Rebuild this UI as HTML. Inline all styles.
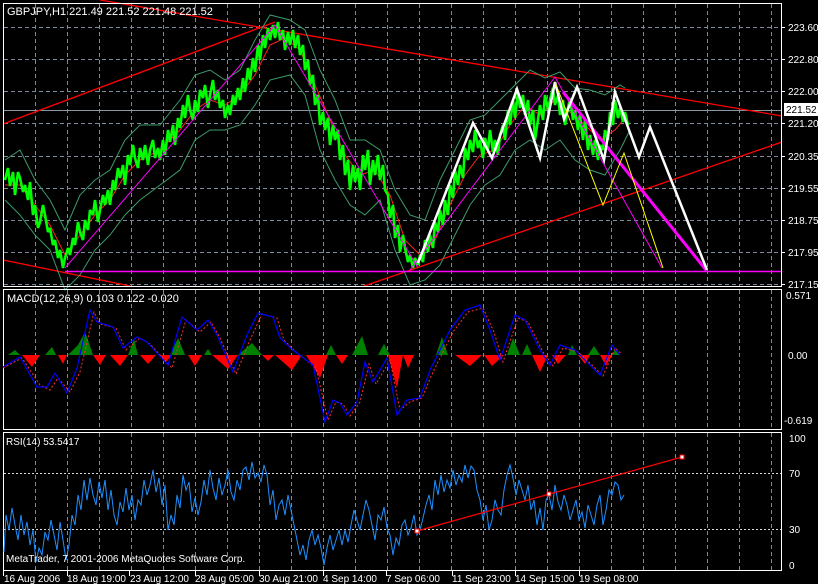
<!DOCTYPE html>
<html><head><meta charset="utf-8"><style>
html,body{margin:0;padding:0;background:#000;}
svg{display:block;font-family:"Liberation Sans",sans-serif;}
</style></head><body>
<svg width="818" height="584" viewBox="0 0 818 584" xmlns="http://www.w3.org/2000/svg">
<rect width="818" height="584" fill="#000"/>
<g stroke="#7f8a99" stroke-width="1" stroke-dasharray="4,3">
<path d="M35.5 4V286M67.5 4V286M99.5 4V286M131.5 4V286M163.5 4V286M195.5 4V286M227.5 4V286M259.5 4V286M291.5 4V286M323.5 4V286M355.5 4V286M387.5 4V286M419.5 4V286M451.5 4V286M483.5 4V286M515.5 4V286M547.5 4V286M579.5 4V286M611.5 4V286M643.5 4V286M675.5 4V286M707.5 4V286M739.5 4V286M771.5 4V286"/>
<path d="M35.5 290V430M67.5 290V430M99.5 290V430M131.5 290V430M163.5 290V430M195.5 290V430M227.5 290V430M259.5 290V430M291.5 290V430M323.5 290V430M355.5 290V430M387.5 290V430M419.5 290V430M451.5 290V430M483.5 290V430M515.5 290V430M547.5 290V430M579.5 290V430M611.5 290V430M643.5 290V430M675.5 290V430M707.5 290V430M739.5 290V430M771.5 290V430"/>
<path d="M35.5 433V570M67.5 433V570M99.5 433V570M131.5 433V570M163.5 433V570M195.5 433V570M227.5 433V570M259.5 433V570M291.5 433V570M323.5 433V570M355.5 433V570M387.5 433V570M419.5 433V570M451.5 433V570M483.5 433V570M515.5 433V570M547.5 433V570M579.5 433V570M611.5 433V570M643.5 433V570M675.5 433V570M707.5 433V570M739.5 433V570M771.5 433V570"/>
<path d="M4 27.5H782M4 59.5H782M4 91.5H782M4 123.5H782M4 156.5H782M4 188.5H782M4 220.5H782M4 252.5H782M4 284.5H782"/>
</g>
<g stroke="#ddd" stroke-width="1" stroke-dasharray="2,2">
<path d="M4 473.5H782M4 529.5H782"/>
</g>
<path d="M4 110.5H782" stroke="#8a96a6" stroke-width="1"/>
<g stroke="#ff0000" stroke-width="1.3" fill="none">
<path d="M3 124L275 22"/>
<path d="M100 0L782 116"/>
<path d="M364 286L782 142"/>
<path d="M3 260L130 286"/>
</g>
<g stroke="#3d9a6a" stroke-width="1" fill="none">
<polyline points="5,160 20,150 35,180 50,200 65,230 80,195 95,180 110,170 125,140 140,125 160,125 180,100 195,75 210,70 225,80 240,70 255,40 270,15 290,20 305,30 320,70 335,100 350,140 365,140 380,150 395,190 410,215 425,220 440,180 455,150 470,120 485,115 500,100 515,85 530,70 545,78 560,72 575,88 590,90 605,95 620,85 625,88"/>
<polyline points="5,200 20,215 35,235 50,250 65,290 80,275 95,250 110,235 125,215 140,200 160,185 180,170 195,140 210,130 225,130 240,125 255,105 270,80 290,75 305,95 320,150 335,180 350,205 365,215 380,200 395,250 410,285 425,280 440,265 455,235 470,205 485,185 500,175 515,150 530,140 545,150 560,140 575,160 590,170 605,175 620,150 630,130"/>
</g>
<polyline fill="none" stroke="#ff2020" stroke-width="1" points="5,185 20,185 35,205 50,225 65,255 80,235 95,215 110,200 125,175 140,160 160,150 180,130 195,110 210,100 225,105 240,95 255,75 270,45 285,38 300,50 315,85 330,120 345,155 360,175 375,170 390,195 405,240 420,255 435,240 450,205 465,175 480,155 495,150 510,125 525,105 540,115 555,100 570,112 585,125 600,140 615,130 625,118"/>
<polyline fill="none" stroke="#00ff00" stroke-width="2.6" stroke-linejoin="bevel" points="5,180 8,168 10,186 13,172 15,195 18,172 20,178 23,192 25,185 28,200 30,182 33,215 35,205 38,228 40,222 43,205 45,215 48,232 50,228 53,245 55,240 58,258 60,250 63,268 65,258 68,248 70,255 73,238 75,245 78,222 80,232 83,240 85,220 88,230 90,210 93,215 95,200 98,222 100,210 103,195 105,205 108,190 110,205 113,180 115,190 118,168 120,178 123,165 125,185 128,155 130,165 133,145 135,158 138,168 140,148 143,160 145,145 148,165 150,150 153,140 155,158 158,148 160,160 163,140 165,155 168,130 170,142 173,125 175,145 178,118 180,128 183,105 185,118 188,95 190,110 193,120 195,100 198,112 200,90 203,98 205,85 208,108 210,95 213,80 215,100 218,90 220,108 223,100 225,118 228,105 230,115 233,95 235,105 238,88 240,100 243,78 245,92 248,68 250,80 253,58 255,72 258,45 260,60 263,35 265,48 268,28 270,40 273,25 275,38 278,22 280,40 283,30 285,50 288,32 290,45 293,30 295,48 298,35 300,55 303,45 305,70 308,60 310,85 313,75 315,105 318,95 320,125 323,112 325,130 328,118 330,145 333,125 335,140 338,130 340,160 343,145 345,175 348,160 350,190 353,165 355,182 358,168 360,190 363,155 365,170 368,150 370,185 373,160 375,175 378,155 380,180 383,165 385,190 388,195 390,218 393,205 395,238 398,225 400,252 403,235 405,248 408,262 410,255 413,268 415,258 418,265 420,255 423,262 425,240 428,252 430,235 433,248 435,222 438,232 440,210 443,225 445,200 448,215 450,185 453,198 455,170 458,185 460,165 463,178 465,148 468,160 470,140 473,152 475,130 478,148 480,140 483,158 485,138 488,150 490,130 493,152 495,140 498,155 500,135 503,125 505,140 508,110 510,125 513,100 515,118 518,92 520,108 523,95 525,115 528,100 530,125 533,110 535,140 538,120 540,105 543,120 545,95 548,110 550,100 553,88 555,105 558,95 560,115 563,100 565,125 568,108 570,98 573,120 575,110 578,130 580,115 583,140 585,120 588,150 590,135 593,155 595,140 598,160 600,145 603,150 605,130 608,140 610,112 613,125 615,100 618,118 620,108 623,122 625,112 628,125"/>
<g stroke="#ff00ff" fill="none">
<path d="M65 271.5H782" stroke-width="1.5"/>
<path d="M65 268L275 25L418 268" stroke-width="1"/>
<path d="M410 270L555 77L662 268" stroke-width="1"/>
<path d="M563 92L706 270" stroke-width="3"/>
</g>
<polyline fill="none" stroke="#fff" stroke-width="2.5" points="418,263 473,123 492,158 517,89 540,158 555,82 564,119 577,87 604,160 615,92 639,157 650,127 707,270"/>
<polyline fill="none" stroke="#ffff00" stroke-width="1" points="555,82 603,205 624,153 663,268"/>
<g stroke="#fff" fill="none" stroke-width="1">
<rect x="3.5" y="3.5" width="778" height="283"/>
<rect x="3.5" y="289.5" width="778" height="140"/>
<rect x="3.5" y="432.5" width="778" height="138"/>
</g>
<g fill="#008000">
<polygon points="8,355 15,350 20,355"/>
<polygon points="45,355 52,347 56,355"/>
<polygon points="68,355 78,345 85,332 88,340 93,355"/>
<polygon points="128,355 134,339 138,355"/>
<polygon points="170,355 178,338 185,355"/>
<polygon points="204,355 208,349 212,355"/>
<polygon points="238,355 252,343 262,355"/>
<polygon points="326,355 331,345 336,355"/>
<polygon points="352,355 362,336 368,355"/>
<polygon points="378,355 384,344 390,355"/>
<polygon points="436,355 442,337 448,355"/>
<polygon points="507,355 513,338 520,355"/>
<polygon points="522,355 527,344 532,355"/>
<polygon points="568,355 572,345 577,355"/>
<polygon points="588,355 594,346 600,355"/>
<polygon points="612,355 616,348 620,355"/>
</g>
<g fill="#ff0000">
<polygon points="22,355 32,367 40,355"/>
<polygon points="58,355 63,364 67,355"/>
<polygon points="93,355 100,365 106,355"/>
<polygon points="110,355 120,366 128,355"/>
<polygon points="140,355 148,364 156,355"/>
<polygon points="160,355 166,362 172,355"/>
<polygon points="188,355 195,366 202,355"/>
<polygon points="212,355 228,369 238,355"/>
<polygon points="262,355 268,361 274,355"/>
<polygon points="275,355 292,370 302,355"/>
<polygon points="306,355 320,378 328,355"/>
<polygon points="336,355 342,364 348,355"/>
<polygon points="388,355 397,388 403,355"/>
<polygon points="403,355 408,368 414,355"/>
<polygon points="455,355 470,366 482,355"/>
<polygon points="484,355 492,366 504,355"/>
<polygon points="532,355 540,372 548,355"/>
<polygon points="552,355 558,364 566,355"/>
<polygon points="578,355 585,364 590,355"/>
<polygon points="600,355 606,366 612,355"/>
</g>
<polyline fill="none" stroke="#ff3030" stroke-width="1" stroke-dasharray="2,2" points="3,368 22,358 40,385 50,390 58,378 70,392 80,372 94,312 100,324 116,328 126,350 140,338 150,344 172,368 186,320 200,332 211,322 220,338 236,374 250,340 262,314 277,318 284,340 296,352 316,368 328,420 336,402 343,404 350,416 360,402 369,364 376,384 390,360 400,410 410,402 422,398 433,372 453,332 468,312 483,308 494,332 503,362 518,318 528,322 543,352 553,366 563,348 578,352 593,366 603,376 615,348 622,354"/>
<polyline fill="none" stroke="#0000ff" stroke-width="1.2" points="3,367 20,357 37,387 47,387 55,373 67,393 77,368 90,310 97,322 113,327 123,348 137,337 147,342 168,365 182,317 197,330 208,320 217,335 233,372 247,335 258,313 273,317 280,338 293,350 313,365 325,422 333,400 340,403 347,415 357,402 365,362 373,382 387,358 397,415 407,400 420,398 430,370 450,330 465,310 480,305 490,330 500,360 515,315 525,320 540,350 550,365 560,345 575,350 590,365 600,375 612,345 620,355"/>
<polyline fill="none" stroke="#1e90ff" stroke-width="1" points="4,552 6,515 9,530 12,508 15,525 18,540 21,515 24,535 27,522 30,545 33,530 36,562 39,548 42,555 45,532 48,540 51,520 54,535 57,550 60,522 63,540 66,560 69,545 72,515 75,525 78,495 81,510 84,480 87,500 90,478 93,495 96,505 99,482 102,498 105,480 108,510 111,490 114,515 117,525 120,502 123,512 126,488 129,510 132,495 135,520 138,500 141,505 144,480 147,495 150,485 153,470 156,492 159,478 162,505 165,485 168,530 171,515 174,525 177,495 180,508 183,475 186,490 189,482 192,512 195,498 198,515 201,502 204,480 207,495 210,470 213,488 216,500 219,478 222,495 225,485 228,470 231,492 234,500 237,480 240,490 243,470 246,467 249,480 252,462 255,478 258,473 261,482 264,465 267,475 270,505 273,490 276,520 279,505 282,500 285,515 288,495 291,510 294,525 297,540 300,555 303,545 306,560 309,540 312,530 315,545 318,535 321,548 324,565 327,548 330,535 333,550 336,540 339,530 342,545 345,530 348,542 351,525 354,510 357,520 360,530 363,515 366,500 369,510 372,525 375,540 378,515 381,520 384,507 387,528 390,535 393,555 396,538 399,545 402,525 405,520 408,535 411,528 414,515 417,535 420,530 423,518 426,505 429,495 432,510 435,480 438,495 441,475 444,492 447,480 450,488 453,470 456,485 459,475 462,482 465,465 468,478 471,466 474,470 477,490 480,500 483,520 486,505 489,530 492,520 495,500 498,510 501,515 504,490 507,475 510,465 513,478 516,495 519,480 522,490 525,500 528,485 531,510 534,500 537,525 540,508 543,530 546,500 549,495 552,510 555,485 558,502 561,510 564,495 567,505 570,520 573,510 576,500 579,520 582,512 585,528 588,505 591,515 594,525 597,505 600,495 603,525 606,510 609,490 612,495 615,482 618,485 621,500 624,495"/>
<path d="M417 531L682 457" stroke="#ff0000" stroke-width="1.2"/>
<g fill="#fff" stroke="#ff0000" stroke-width="1">
<rect x="415" y="529" width="4" height="4"/>
<rect x="547" y="492" width="4" height="4"/>
<rect x="680" y="455" width="4" height="4"/>
</g>
<g fill="#fff" font-size="11">
<text x="7" y="15">GBPJPY,H1  221.49 221.52 221.48 221.52</text>
<text x="7" y="302">MACD(12,26,9) 0.103 0.122 -0.020</text>
<text x="6" y="445" font-size="10">RSI(14) 53.5417</text>
<text x="6" y="562" font-size="10">MetaTrader, 7 2001-2006 MetaQuotes Software Corp.</text>
</g>
<g fill="#fff" font-size="10">
<text x="788" y="31">223.60</text>
<text x="788" y="63">222.80</text>
<text x="788" y="95">222.00</text>
<text x="788" y="127">221.20</text>
<text x="788" y="160">220.35</text>
<text x="788" y="192">219.55</text>
<text x="788" y="224">218.75</text>
<text x="788" y="256">217.95</text>
<text x="788" y="288">217.15</text>
<text x="786" y="299">0.571</text>
<text x="788" y="359">0.00</text>
<text x="784" y="424">-0.619</text>
<text x="789" y="442">100</text>
<text x="789" y="477">70</text>
<text x="789" y="533">30</text>
<text x="789" y="569">0</text>
</g>
<rect x="784" y="103" width="34" height="13" fill="#fff"/>
<text x="786" y="113" fill="#000" font-size="10">221.52</text>
<g stroke="#fff" stroke-width="1">
<path d="M782 27.5h3M782 59.5h3M782 91.5h3M782 123.5h3M782 156.5h3M782 188.5h3M782 220.5h3M782 252.5h3M782 284.5h3"/>
</g>
<g stroke="#fff" stroke-width="1">
<path d="M3.5 571v5M67.5 571v5M129.5 571v5M195.5 571v5M259.5 571v5M323.5 571v5M386.5 571v5M452.5 571v5M515.5 571v5M579.5 571v5"/>
</g>
<g fill="#fff" font-size="10">
<text x="4" y="582">16 Aug 2006</text>
<text x="67" y="582">18 Aug 19:00</text>
<text x="130" y="582">23 Aug 12:00</text>
<text x="195" y="582">28 Aug 05:00</text>
<text x="259" y="582">30 Aug 21:00</text>
<text x="323" y="582">4 Sep 14:00</text>
<text x="386" y="582">7 Sep 06:00</text>
<text x="452" y="582">11 Sep 23:00</text>
<text x="515" y="582">14 Sep 15:00</text>
<text x="579" y="582">19 Sep 08:00</text>
</g>
</svg>
</body></html>
